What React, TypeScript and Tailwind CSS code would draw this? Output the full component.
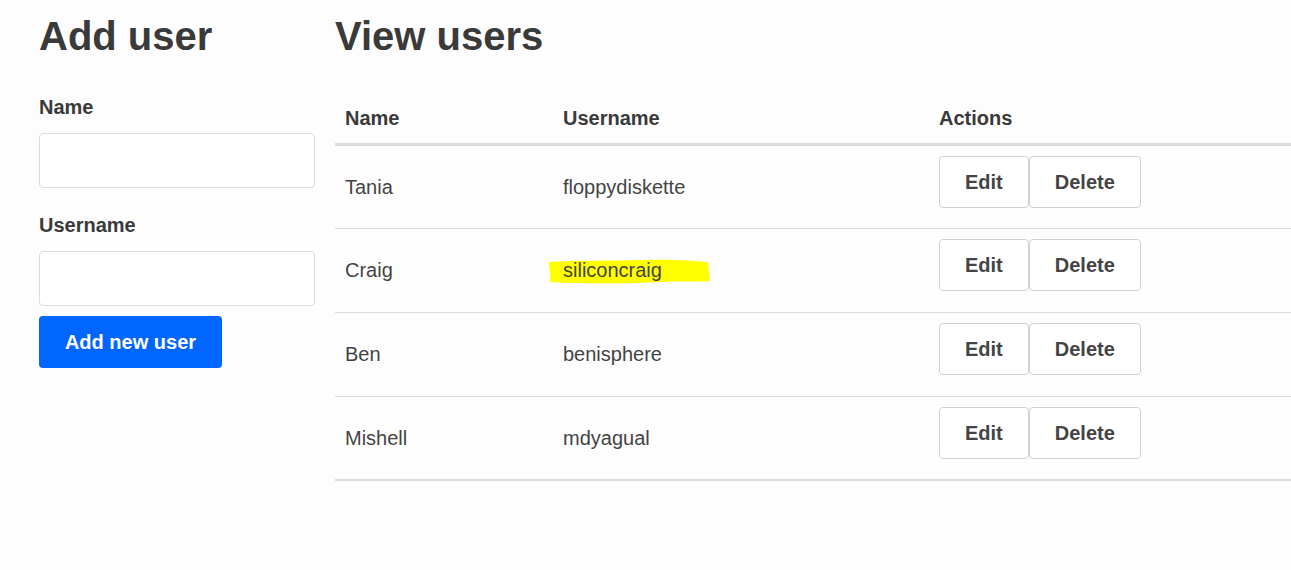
import React from "react";

const users = [
    {id: 1, name: "Tania", username: "floppydiskette"},
    {id: 2, name: "Craig", username: "siliconcraig"},
    {id: 3, name: "Ben", username: "benisphere"},
    {id: 4, name: "Mishell", username: "mdyagual"},
];

const Highlight = () => (
    <svg
        className="absolute left-[-14px] top-[0px] pointer-events-none"
        width="161"
        height="25"
        viewBox="0 0 161 25"
    >
        <path
            d="M0 3 C25 1 60 2 95 1 C120 0 145 2 159 3 L161 22 C150 23 130 22 110 23 C80 25 45 24 20 24 L1 23 C2 16 0 9 0 3 Z"
            fill="#ffff00"
        />
    </svg>
);

const ActionButton = ({label}: { label: string }) => (
    <button className="h-[52px] px-[25px] border border-[#d1d1d1] rounded-[4px] bg-white text-[20px] font-bold text-[#444]">
        {label}
    </button>
);

const App = () => {
    return (
        <div
            className="w-full min-h-[570px] bg-[#fefdfd] text-[#3a3a3a] flex gap-[20px] pl-[39px] pt-[12px]"
            style={{fontFamily: '"Liberation Sans", Arial, sans-serif'}}
        >
            <div className="w-[276px] shrink-0">
                <h1 className="text-[40px] font-bold leading-[48px]">Add user</h1>
                <form className="mt-[35px] flex flex-col">
                    <label className="text-[20px] font-bold leading-[24px]">Name</label>
                    <input className="mt-[14px] h-[55px] border border-[#dcdcdc] rounded-[4px] bg-white"/>
                    <label className="mt-[25px] text-[20px] font-bold leading-[24px]">Username</label>
                    <input className="mt-[14px] h-[55px] border border-[#dcdcdc] rounded-[4px] bg-white"/>
                    <button
                        type="button"
                        className="mt-[10px] w-[183px] h-[52px] rounded-[4px] bg-[#0066ff] text-white text-[20px] font-bold"
                    >
                        Add new user
                    </button>
                </form>
            </div>
            <div className="flex-1">
                <h1 className="text-[40px] font-bold leading-[48px]">View users</h1>
                <table className="mt-[29px] w-full border-collapse text-left">
                    <thead>
                    <tr className="border-b-[3px] border-[#dcdcdc]">
                        <th className="w-[218px] pl-[10px] pt-[4px] h-[55px] text-[20px] font-bold">Name</th>
                        <th className="w-[376px] pl-[10px] pt-[4px] text-[20px] font-bold">Username</th>
                        <th className="pl-[10px] pt-[4px] text-[20px] font-bold">Actions</th>
                    </tr>
                    </thead>
                    <tbody className="border-b-2 border-[#dcdcdc]">
                    {users.map((user, i) => (
                        <tr key={user.id} className={i < users.length - 1 ? "border-b border-[#dcdcdc]" : ""}>
                            <td className="pl-[10px] h-[84px] text-[20px] text-[#444]">{user.name}</td>
                            <td className="pl-[10px] text-[20px] text-[#444]">
                                <span className="relative">
                                    {user.username === "siliconcraig" && <Highlight/>}
                                    <span className="relative">{user.username}</span>
                                </span>
                            </td>
                            <td className="pl-[10px] pt-[10px] pb-[20px] align-top">
                                <div className="flex">
                                    <ActionButton label="Edit"/>
                                    <ActionButton label="Delete"/>
                                </div>
                            </td>
                        </tr>
                    ))}
                    </tbody>
                </table>
            </div>
        </div>
    );
};

export default App;
